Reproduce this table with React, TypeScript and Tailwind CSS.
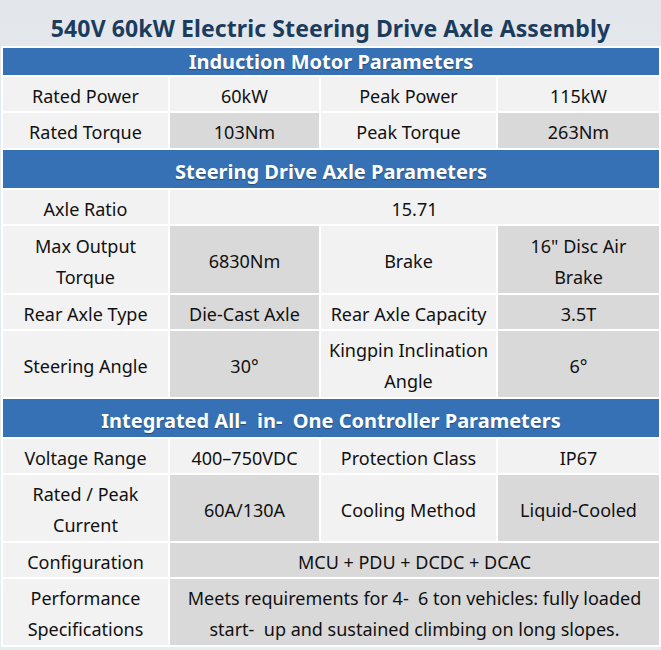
import React from "react";

type Cell = {
    text: React.ReactNode;
    span?: number;
    dark?: boolean;
};

const light = "bg-[#f2f2f2]";
const dark = "bg-[#d9d9d9]";

const Header: React.FC<{ title: React.ReactNode; tall?: boolean }> = ({ title, tall }) => (
    <div
        className={`col-span-4 flex items-center justify-center bg-[#3571b4] text-[20px] font-bold text-white [text-shadow:0_1px_1px_rgba(0,0,0,0.35)] ${
            tall ? "pt-[5px]" : "pt-[1px]"
        }`}
    >
        {title}
    </div>
);

const Row: React.FC<{ cells: Cell[] }> = ({ cells }) => (
    <>
        {cells.map((c, i) => (
            <div
                key={i}
                className={`flex items-center justify-center pt-[4px] text-center leading-[31px] ${
                    c.span === 3 ? "col-span-3" : ""
                } ${c.dark ? dark : light}`}
            >
                <span>{c.text}</span>
            </div>
        ))}
    </>
);

export default function App() {
    return (
        <div className="h-[650px] w-[661px] bg-gradient-to-b from-[#e3e7ec] to-[#e4eeee] font-['Noto_Sans',sans-serif] text-[#111]">
            <h1 className="flex h-[46px] items-center justify-center pt-[10px] text-[23px] font-bold tracking-[0.1px] text-[#1c3c5e]">
                540V 60kW Electric Steering Drive Axle Assembly
            </h1>
            <div className="ml-[1px] w-[660px] bg-white p-[2px] text-[18px]">
                <div className="grid grid-cols-[165px_149px_175px_161px] grid-rows-[27px_34px_35px_38px_34px_67px_34px_66px_38px_34px_66px_34px_66px] gap-[2px]">
                    <Header title="Induction Motor Parameters" />
                    <Row
                        cells={[
                            { text: "Rated Power" },
                            { text: "60kW" },
                            { text: "Peak Power" },
                            { text: "115kW" },
                        ]}
                    />
                    <Row
                        cells={[
                            { text: "Rated Torque" },
                            { text: "103Nm", dark: true },
                            { text: "Peak Torque" },
                            { text: "263Nm", dark: true },
                        ]}
                    />

                    <Header title="Steering Drive Axle Parameters" tall />
                    <Row
                        cells={[
                            { text: "Axle Ratio" },
                            { text: "15.71", span: 3 },
                        ]}
                    />
                    <Row
                        cells={[
                            {
                                text: (
                                    <>
                                        Max Output
                                        <br />
                                        Torque
                                    </>
                                ),
                            },
                            { text: "6830Nm", dark: true },
                            { text: "Brake" },
                            {
                                text: (
                                    <>
                                        16" Disc Air
                                        <br />
                                        Brake
                                    </>
                                ),
                                dark: true,
                            },
                        ]}
                    />
                    <Row
                        cells={[
                            { text: "Rear Axle Type" },
                            { text: "Die-Cast Axle", dark: true },
                            { text: "Rear Axle Capacity" },
                            { text: "3.5T", dark: true },
                        ]}
                    />
                    <Row
                        cells={[
                            { text: "Steering Angle" },
                            { text: "30°", dark: true },
                            {
                                text: (
                                    <>
                                        Kingpin Inclination
                                        <br />
                                        Angle
                                    </>
                                ),
                            },
                            { text: "6°", dark: true },
                        ]}
                    />

                    <Header
                        tall
                        title={
                            <span className="whitespace-pre">
                                Integrated All-  in-  One Controller Parameters
                            </span>
                        }
                    />
                    <Row
                        cells={[
                            { text: "Voltage Range" },
                            { text: "400–750VDC" },
                            { text: "Protection Class" },
                            { text: "IP67" },
                        ]}
                    />
                    <Row
                        cells={[
                            {
                                text: (
                                    <>
                                        Rated / Peak
                                        <br />
                                        Current
                                    </>
                                ),
                            },
                            { text: "60A/130A", dark: true },
                            { text: "Cooling Method" },
                            { text: "Liquid-Cooled", dark: true },
                        ]}
                    />
                    <Row
                        cells={[
                            { text: "Configuration" },
                            { text: "MCU + PDU + DCDC + DCAC", span: 3, dark: true },
                        ]}
                    />
                    <Row
                        cells={[
                            {
                                text: (
                                    <>
                                        Performance
                                        <br />
                                        Specifications
                                    </>
                                ),
                            },
                            {
                                text: (
                                    <span className="whitespace-pre">
                                        Meets requirements for 4-  6 ton vehicles: fully loaded
                                        <br />
                                        start-  up and sustained climbing on long slopes.
                                    </span>
                                ),
                                span: 3,
                                dark: true,
                            },
                        ]}
                    />
                </div>
            </div>
        </div>
    );
}
